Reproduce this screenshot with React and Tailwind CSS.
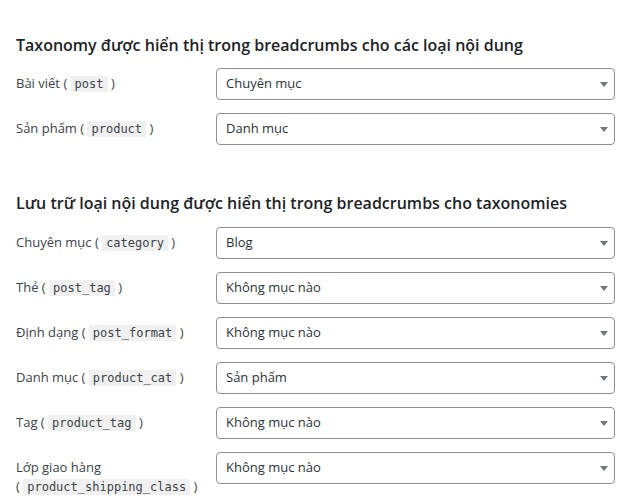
import React from 'react';

const postTypes = [
    { label: 'Bài viết', code: 'post', value: 'Chuyên mục' },
    { label: 'Sản phẩm', code: 'product', value: 'Danh mục' },
];

const taxonomies = [
    { label: 'Chuyên mục', code: 'category', value: 'Blog' },
    { label: 'Thẻ', code: 'post_tag', value: 'Không mục nào' },
    { label: 'Định dạng', code: 'post_format', value: 'Không mục nào' },
    { label: 'Danh mục', code: 'product_cat', value: 'Sản phẩm' },
    { label: 'Tag', code: 'product_tag', value: 'Không mục nào' },
    { label: 'Lớp giao hàng', code: 'product_shipping_class', value: 'Không mục nào', wrap: true },
];

function Code({ children }) {
    return (
        <code className="bg-[#f0f0f1] px-[4px] py-[1px] font-['DejaVu_Sans_Mono',monospace] text-[12px] text-[#3c434a]">
            {children}
        </code>
    );
}

function Row({ item }) {
    return (
        <div className="flex items-start">
            <div className="w-[200px] shrink-0 pt-[6px] pr-2 text-[13px] leading-[19px] text-[#3c434a]">
                {item.wrap ? (
                    <>
                        {item.label}
                        <br />
                        ( <Code>{item.code}</Code> )
                    </>
                ) : (
                    <>
                        {item.label} ( <Code>{item.code}</Code> )
                    </>
                )}
            </div>
            <div className="relative flex h-[32px] flex-1 items-center rounded-[4px] border border-[#8c8f94] bg-white pl-[9px] text-[13px] text-[#2c3338]">
                {item.value}
                <span className="absolute right-[6px] top-[13px] h-0 w-0 border-x-[4px] border-t-[5px] border-x-transparent border-t-[#72777c]" />
            </div>
        </div>
    );
}

export default function App() {
    return (
        <div className="min-h-screen bg-white pl-4 pr-[7px] pt-[33px] font-['Open_Sans',sans-serif]">
            <h2 className="text-[16px] font-semibold leading-[24px] text-[#1d2327]">
                Taxonomy được hiển thị trong breadcrumbs cho các loại nội dung
            </h2>
            <div className="mt-[11px] flex flex-col gap-[13px]">
                {postTypes.map(item => <Row key={item.code} item={item} />)}
            </div>

            <h2 className="mt-[46px] text-[16px] font-semibold leading-[24px] text-[#1d2327]">
                Lưu trữ loại nội dung được hiển thị trong breadcrumbs cho taxonomies
            </h2>
            <div className="mt-[12px] flex flex-col gap-[13px]">
                {taxonomies.map(item => <Row key={item.code} item={item} />)}
            </div>
        </div>
    );
}
